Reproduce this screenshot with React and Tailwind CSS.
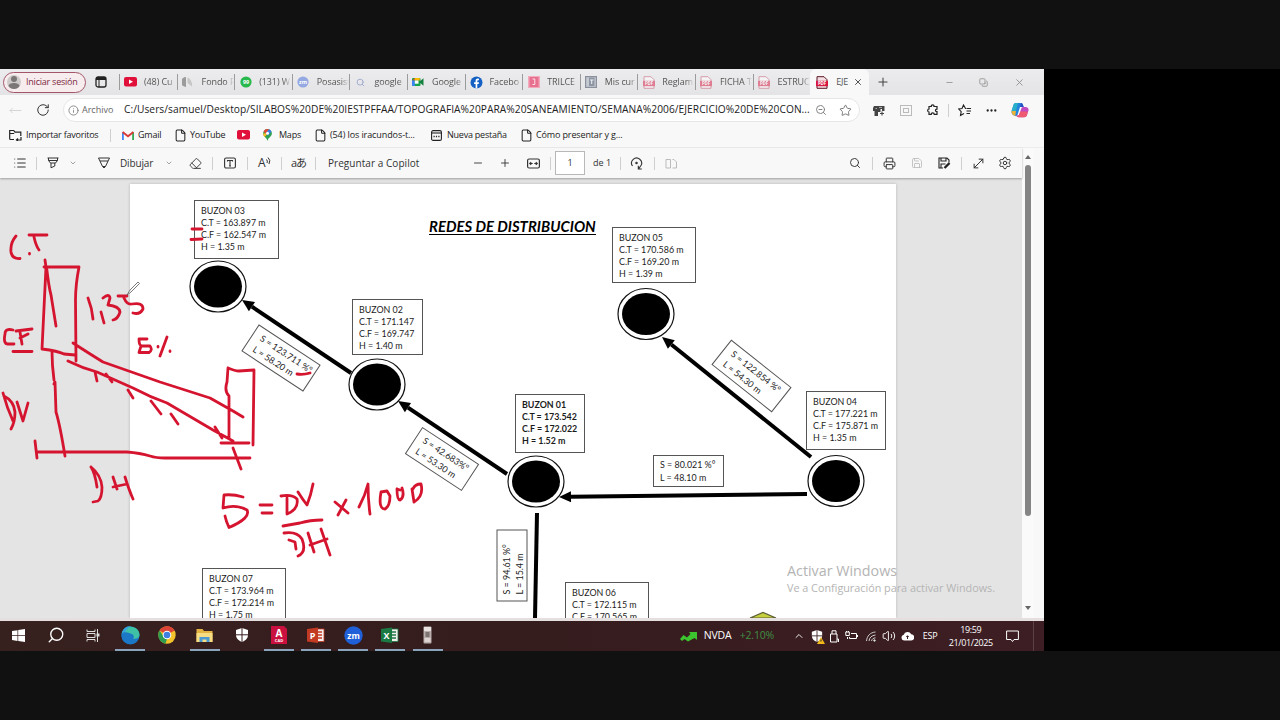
import React from "react";
import {
  RotateCw, Info, Star, ZoomOut, Search, Printer, Save, Settings, Minus, Plus, ChevronDown, ChevronUp,
  File, Eraser, X, Puzzle, Ellipsis, MoveLeft, MoveDiagonal, Copy, List, Volume2,
} from "lucide-react";

const Cell = ({ className = "", children }) => (
  <div className={"flex h-full shrink-0 items-center whitespace-nowrap " + className}>{children}</div>
);
const Sep = ({ className = "" }) => (
  <Cell className={className}><div className="h-[13px] w-px bg-[#cfcfcf]" /></Cell>
);

/* ---------- small icons ---------- */
const YouTubeIcon = () => (
  <svg width="13" height="10" viewBox="0 0 13 10"><rect width="13" height="9.6" rx="2" fill="#e0103a" /><path d="M5 2.6 9 4.8 5 7z" fill="#fff" /></svg>
);
const PdfIcon = ({ faded }) => (
  <svg width="12" height="13" viewBox="0 0 12 13" opacity={faded ? 0.5 : 1}>
    <path d="M1 .7h7l3 3v8.6H1z" fill={faded ? "#fff" : "#f3dfe3"} stroke={faded ? "#c2526a" : "#5b1524"} strokeWidth="1" />
    <rect x="0" y="4.8" width="12" height="5.4" fill="#d8163f" />
    <text x="6" y="9.2" textAnchor="middle" fontSize="4.4" fontWeight="700" fill="#fff" fontFamily="Open Sans, sans-serif">PDF</text>
  </svg>
);
const DocIcon = () => <File size={13} strokeWidth={1.9} color="#222" />;
const MeetIcon = () => (
  <svg width="12" height="10" viewBox="0 0 12 10">
    <rect x="0" y="1" width="8.5" height="8" rx="1" fill="#16a34a" /><path d="M0 3.5 2.8 1v2.5z" fill="#ea4335" />
    <path d="M2.8 1h5v2.5h-5z" fill="#fbbc04" /><path d="M0 3.5h2.8V9H1a1 1 0 0 1-1-1z" fill="#3b82f6" /><rect x="2.8" y="3.5" width="3.7" height="3.2" fill="#fff" />
    <path d="M7 5 11.5 1.2v7.6z" fill="#15803d" />
  </svg>
);
const FacebookIcon = () => (
  <svg width="13" height="13" viewBox="0 0 13 13"><circle cx="6.5" cy="6.5" r="6" fill="#1560c4" /><path d="M5.6 12.5V8H4.1V6.2h1.5V5c0-1.6.9-2.4 2.3-2.4l1.1.1v1.6h-.7c-.8 0-1 .4-1 1v.9H9L8.7 8H7.3v4.5z" fill="#fff" /></svg>
);
const GmailIcon = () => (
  <svg width="12" height="9" viewBox="0 0 12 9"><path d="M.9 9V1.2" stroke="#4285f4" strokeWidth="1.8" /><path d="M11.1 9V1.2" stroke="#34a853" strokeWidth="1.8" /><path d="M.6 1 6 5.2 11.4 1" fill="none" stroke="#d93a36" strokeWidth="1.9" /></svg>
);
const PinIcon = () => (
  <svg width="9" height="12" viewBox="0 0 9 12"><path d="M4.5 0A4.4 4.4 0 0 0 .1 4.4C.1 7.500 4 8.500 4.500 12 5 8.500 8.900 7.500 8.900 4.400A4.400 4.400 0 0 0 4.500 0z" fill="#2fa152" /><path d="M.6 2.300A4.400 4.400 0 0 1 4.500 0L6 .3 2.500 5z" fill="#e5483b" /><path d="M6 .3a4.400 4.400 0 0 1 2.500 2.300L5 6.500 2.500 5z" fill="#3d7eea" /><path d="M.1 4.400c0 1.500.8 2.500 1.700 3.500L5 4z" fill="#f4b821" /><circle cx="4.500" cy="4.300" r="1.500" fill="#fff" /></svg>
);
const Globe = () => (
  <svg width="12" height="12" viewBox="0 0 12 12"><path d="M2 1a5 5 0 0 0 0 10z" fill="#9c9c9c" transform="translate(2 0)" /><path d="M5.500 1.500c3 1 5 5 4.500 9L5.500 7z" fill="#c6c6c6" /></svg>
);
const Ball = ({ fill, label }) => (
  <svg width="12" height="12" viewBox="0 0 12 12"><circle cx="6" cy="6" r="5.600" fill={fill} /><text x="6" y="7.900" fontSize="5.500" fontWeight="700" textAnchor="middle" fill="#fff" fontFamily="Open Sans, sans-serif">{label}</text></svg>
);
const TrilceIcon = () => (
  <svg width="12" height="12" viewBox="0 0 12 12"><rect width="12" height="12" fill="#f2a9bb" /><rect x="1.500" y="1" width="9" height="10" fill="#e8718f" /><path d="M4.500 3h2.300v5.500H4.500" fill="none" stroke="#fbe3e9" /></svg>
);
const CourseIcon = () => (
  <svg width="12" height="12" viewBox="0 0 12 12"><rect x=".6" y=".6" width="10.800" height="10.800" fill="#c6cad2" stroke="#8a909c" strokeWidth="1.200" /><rect x="4" y="1.500" width="5.500" height="8.500" fill="#8f96a3" /><path d="M5 4h3.500M6.700 4v4" stroke="#eef0f4" /></svg>
);
const CopilotIcon = () => (
  <svg width="18" height="16" viewBox="0 0 18 16">
    <path d="M5 1h5c1 0 1.600.7 2 2l.6 2H9L6.500 13C6 14 5.500 14.500 4.500 14 2 13.500 0 11.500.6 9L2.500 3C3 1.600 4 1 5 1z" fill="#2384e0" />
    <path d="M1.200 7 2.500 3C3 1.600 4 1 5 1h2L5 9H.6z" fill="#28b0c8" /><path d="M.6 9H5l-.8 5C2 13.500.1 11.500.6 9z" fill="#e9b23b" />
    <path d="M12.500 5h2c2 0 3.500 1.500 3 3.500l-1.500 4.500c-.5 1.500-1.500 2.200-3 2.200H7.500c-1 0-1.800-.6-2.100-1.700h1.100c1 0 1.500-.5 1.900-1.500L10.500 6c.4-.8 1-1 2-1z" fill="#c04ac0" />
    <path d="M5.400 13.500h1.100c1 0 1.500-.5 1.900-1.500l.8-2.500h7.500L16 13c-.5 1.500-1.500 2.200-3 2.200H7.500c-1 0-1.800-.6-2.100-1.700z" fill="#ee5a72" />
    <path d="M10 1c1 0 1.600.7 2 2l.7 2H9z" fill="#2a50bf" />
  </svg>
);

/* ---------- browser chrome ---------- */
const tabs = [
  ["(48) Cu", <YouTubeIcon />], ["Fondo P", <Globe />], ["(131) W", <Ball fill="#27b84e" label="99" />],
  ["Posasist", <Ball fill="#94a8e2" label="zm" />], ["google", <Search size={9} color="#a0a9cf" strokeWidth={2.500} />], ["Google", <MeetIcon />],
  ["Facebo", <FacebookIcon />], ["TRILCE", <TrilceIcon />], ["Mis cur", <CourseIcon />],
  ["Reglam", <PdfIcon faded />], ["FICHA T", <PdfIcon faded />], ["ESTRUC", <PdfIcon faded />],
];

const TabStrip = () => (
  <div className="flex h-[26px] items-end bg-gradient-to-b from-[#ececee] to-[#e4e4e6] text-[9px] tracking-[-0.01em] text-[#555]">
    <Cell className="w-[94px] pl-[3px]">
      <div className="flex h-[21px] w-[83px] items-center rounded-full border border-[#a3566a] bg-[#f7ecee] pl-[3px] text-[#7d2b42]">
        <svg width="14" height="14" viewBox="0 0 14 14"><circle cx="7" cy="7" r="7" fill="#cfcaca" /><circle cx="7" cy="4" r="3" fill="#7b7777" /><path d="M1.500 11c0-4 11-4 11 0-2 4-9 4-11 0z" fill="#7b7777" /></svg>
        <span className="ml-[5px] tracking-[-0.025em]">Iniciar sesión</span>
      </div>
    </Cell>
    <Cell className="w-[25px] pl-[1px]">
      <svg width="12" height="12" viewBox="0 0 12 12"><rect x="1" y="1" width="10" height="10" rx="2" fill="none" stroke="#222" strokeWidth="1.300" /><path d="M1 1h10v3H1z" fill="#222" /><path d="M4 4v7" stroke="#222" /></svg>
    </Cell>
    {tabs.map(([name, icon], i) => (
      <Cell key={i} className="w-[57.600px]">
        <div className="h-[16px] w-px bg-[#9b9b9b]" />
        <div className="ml-1 flex w-[13px] justify-center">{icon}</div>
        <div className="ml-[7px] w-[32px] overflow-hidden [mask-image:linear-gradient(to_right,black_75%,transparent)]">{name}</div>
      </Cell>
    ))}
    <div className="flex h-[26px] w-[59px] items-center rounded-t-md bg-[#f8f8f8] pl-[6px]">
      <PdfIcon />
      <div className="ml-[8px] w-[13px] overflow-hidden">EJE</div>
      <X size={10} color="#333" className="ml-[4px]" />
    </div>
    <Cell className="w-[76px] pl-[7px]"><Plus size={14} strokeWidth={1.800} color="#444" /></Cell>
    <Cell className="w-[34px]"><Minus size={9} color="#888" /></Cell>
    <Cell className="w-[35px]"><Copy size={9} color="#888" className="-scale-x-100 rotate-90" /></Cell>
    <Cell><X size={11} color="#888" strokeWidth={1.800} /></Cell>
  </div>
);

const AddressBar = () => (
  <div className="flex h-[28px] items-center bg-[#f8f8f8] pt-[2px]">
    <Cell className="w-[36px] pl-[9px]"><MoveLeft size={13} color="#d4d4d4" strokeWidth={1.800} /></Cell>
    <Cell className="w-[27px]"><RotateCw size={14} color="#333" strokeWidth={1.700} /></Cell>
    <div className="flex h-[24px] w-[797px] items-center rounded-full border border-[#e6e6e6] bg-white">
      <Cell className="w-[18px] pl-[4px]"><Info size={11} color="#777" strokeWidth={1.800} /></Cell>
      <Cell className="w-[42px] text-[9px] text-[#666]">Archivo</Cell>
      <Cell className="w-[691px] text-[10.200px] tracking-[0.005em] text-[#222]">C:/Users/samuel/Desktop/SILABOS%20DE%20IESTPFFAA/TOPOGRAFIA%20PARA%20SANEAMIENTO/SEMANA%2006/EJERCICIO%20DE%20CON...</Cell>
      <Cell className="w-[24px]"><ZoomOut size={12} color="#777" strokeWidth={1.800} /></Cell>
      <Cell><Star size={13} color="#777" strokeWidth={1.800} /></Cell>
    </div>
    <Cell className="w-[40px] pl-[13px]">
      <svg width="12" height="11" viewBox="0 0 12 11"><path d="M1 1h10.500v5H9V4H7.500v3H5v4H1.500V6H0V3z" fill="#444" /><path d="M2.500 3.500h1.500M6 2.500h3" stroke="#aaa" fill="none" /><path d="M7 8.500h4M9 6.500v4" stroke="#444" strokeWidth="1.100" /></svg>
    </Cell>
    <Cell className="w-[27px]"><svg width="12" height="11" viewBox="0 0 12 11" fill="none" stroke="#bbb"><rect x=".5" y=".5" width="11" height="10" /><rect x="3.500" y="3.500" width="5" height="4" /></svg></Cell>
    <Cell className="w-[21px]">
      <svg width="12" height="12" viewBox="0 0 12 12" fill="none" stroke="#222" strokeWidth="1.200"><path d="M2 2.500h2.300C4 .3 7.300.3 7 2.500h3v2.700C8 5 8 8 10 7.700v2.600H7.200c0-2-3-2-3 0H2V8C.2 8 .2 5 2 5z" /></svg>
    </Cell>
    <Sep className="w-[10px]" />
    <Cell className="w-[27px]">
      <svg width="14" height="13" viewBox="0 0 14 13" fill="none" stroke="#222" strokeWidth="1.100"><path d="M8.500 4.500H7.500L5.500 1 4 4.500.8 5l2.400 2.600L2.500 11.500 6 9.500M9 4.500h4M8.500 7h4.500M8.500 9.500h3.500" /></svg>
    </Cell>
    <Cell className="w-[26px]"><Ellipsis size={13} color="#222" strokeWidth={2.300} /></Cell>
    <Cell><CopilotIcon /></Cell>
  </div>
);

const Bookmarks = () => (
  <div className="flex h-[25px] items-center border-b border-[#ececec] bg-[#f8f8f8] pl-[9px] text-[9px] tracking-[-0.025em] text-[#222]">
    <Cell className="w-[17px]"><svg width="13" height="12" viewBox="0 0 13 12" fill="none" stroke="#222" strokeWidth="1.200"><path d="M5 10.500H1.500a.8.8 0 0 1-.8-.8V1.500h4l1.300 1.700h5.800V7M.7 4.500h4.500M12 8v3H7.500M9 9.500 7.500 11 9 12" /></svg></Cell>
    <Cell className="w-[84px]">Importar favoritos</Cell>
    <Sep className="w-[12px]" />
    <Cell className="w-[16px]"><GmailIcon /></Cell>
    <Cell className="w-[36px]">Gmail</Cell>
    <Cell className="w-[16px]"><DocIcon /></Cell>
    <Cell className="w-[47px]">YouTube</Cell>
    <Cell className="w-[26px]"><YouTubeIcon /></Cell>
    <Cell className="w-[16px]"><PinIcon /></Cell>
    <Cell className="w-[35px]">Maps</Cell>
    <Cell className="w-[16px]"><DocIcon /></Cell>
    <Cell className="w-[101px] tracking-[-0.01em]">(54) los iracundos-t...</Cell>
    <Cell className="w-[16px]"><svg width="11" height="11" viewBox="0 0 11 11" fill="none" stroke="#222" strokeWidth="1.100"><rect x=".6" y=".6" width="9.800" height="9.800" rx="1.500" /><path d="M1 3h9" /><path d="M2.500 6.500h6" strokeDasharray="1.200 1.200" strokeWidth="1.500" /></svg></Cell>
    <Cell className="w-[73px]">Nueva pestaña</Cell>
    <Cell className="w-[16px]"><DocIcon /></Cell>
    <Cell className="tracking-[-0.015em]">Cómo presentar y g...</Cell>
  </div>
);

const PdfToolbar = () => (
  <div className="relative z-10 flex h-[30px] items-center bg-[#f8f8f8] pl-[13px] text-[10px] text-[#333] shadow-[0_1px_2px_rgba(0,0,0,0.3)]">
    <Cell className="w-[23px]"><List size={14} color="#333" strokeWidth={1.800} /></Cell>
    <Sep className="w-[11px]" />
    <Cell className="w-[22px]"><svg width="12" height="12" viewBox="0 0 12 12" fill="none" stroke="#333" strokeWidth="1"><path d="M.5 1h11M1.500 1v2.500l2 2.500h5l2-2.500V1M1.500 3.500h9M4 6v4.800L7.800 9V6" /></svg></Cell>
    <Cell className="w-[29px]"><ChevronDown size={8} color="#777" /></Cell>
    <Cell className="w-[22px]"><svg width="12" height="12" viewBox="0 0 12 12" fill="none" stroke="#333" strokeWidth="1"><path d="M.5 1h11L7.500 9.500 6 11 4.500 9.500zM2 4h8M4.500 9.500h3" /></svg></Cell>
    <Cell className="w-[45px] tracking-[-0.015em]">Dibujar</Cell>
    <Cell className="w-[24px]"><ChevronDown size={8} color="#777" /></Cell>
    <Cell className="w-[23px]"><Eraser size={13} color="#333" strokeWidth={1.700} /></Cell>
    <Sep className="w-[12px]" />
    <Cell className="w-[23px]"><svg width="12" height="12" viewBox="0 0 12 12" fill="none" stroke="#333" strokeWidth="1.100"><rect x=".6" y="1" width="10.800" height="10" rx="1.500" /><path d="M3.500 4.500v-1h5v1M6 3.500v5.500M5 9h2" /></svg></Cell>
    <Sep className="w-[11px]" />
    <Cell className="w-[23px]"><span className="text-[12px]">A</span><svg width="5" height="8" viewBox="0 0 5 8" className="mb-1" fill="none" stroke="#333"><path d="M.5 2.500Q2 4 1 6M2 .5Q5 3 3 7" /></svg></Cell>
    <Sep className="w-[10px]" />
    <Cell className="w-[24px] text-[11px] tracking-[-0.09em] [font-family:'Open_Sans','Noto_Sans_CJK_JP',sans-serif]">aあ</Cell>
    <Sep className="w-[13px]" />
    <Cell className="w-[144px] tracking-[0.005em]">Preguntar a Copilot</Cell>
    <Cell className="w-[27px]"><Minus size={12} strokeWidth={1.800} /></Cell>
    <Cell className="w-[28px]"><Plus size={12} strokeWidth={1.800} /></Cell>
    <Cell className="w-[23px]"><svg width="13" height="11" viewBox="0 0 13 11" fill="none" stroke="#333" strokeWidth="1.200"><rect x=".6" y="1" width="11.800" height="9" rx="1.500" /><path d="M3 5.500h2.700M7.300 5.500H10M4.200 4.200 2.800 5.500l1.400 1.300M8.800 4.200l1.400 1.300-1.400 1.300" /></svg></Cell>
    <Sep className="w-[5px]" />
    <div className="flex h-[24px] w-[30px] items-center justify-center border border-[#b8b8b8] bg-white text-[9px]">1</div>
    <Cell className="w-[35px] pl-[8px] text-[9px]">de 1</Cell>
    <Sep className="w-[10px]" />
    <Cell className="w-[24px]"><svg width="13" height="13" viewBox="0 0 13 13" fill="none" stroke="#333" strokeWidth="1.100"><path d="M2.500 9A5 5 0 1 1 10.800 8.800L8.500 11.800M11.800 12H8.300V8.800" /><circle cx="6.500" cy="6" r=".7" fill="#333" /></svg></Cell>
    <Sep className="w-[11px]" />
    <Cell className="w-[184px]"><svg width="12" height="11" viewBox="0 0 12 11" fill="none" stroke="#bbb"><path d="M5.500 10H1V1.500h4.500zM7.500 1.500h1.500L11.500 4v6h-4" /></svg></Cell>
    <Cell className="w-[23px]"><Search size={12} color="#333" strokeWidth={1.900} /></Cell>
    <Sep className="w-[11px]" />
    <Cell className="w-[28px]"><Printer size={13} color="#333" strokeWidth={1.800} /></Cell>
    <Cell className="w-[27px]"><Save size={12} color="#bbb" strokeWidth={1.700} /></Cell>
    <Cell className="w-[23px]"><svg width="13" height="12" viewBox="0 0 13 12" fill="none" stroke="#222" strokeWidth="1.100"><path d="M5 11H1V1h8l2 2v2.500M3 1v3h5V1M3 11V7h4.500" /><path d="m6.500 11 5-5" strokeWidth="2.400" /></svg></Cell>
    <Sep className="w-[10px]" />
    <Cell className="w-[27px]"><MoveDiagonal size={15} color="#333" strokeWidth={1.600} /></Cell>
    <Cell><Settings size={14} color="#333" strokeWidth={1.700} /></Cell>
  </div>
);

/* ---------- network drawing ---------- */
const base = "absolute border border-[#555] bg-white whitespace-nowrap text-[#1c1c1c] [font-family:Lato,sans-serif] ";
const Box = ({ className, lines }) => (
  <div className={base + "pt-[4px] pl-[6px] text-[8.900px] leading-[12.100px] " + className}>
    {lines.map((l) => <div key={l}>{l}</div>)}
  </div>
);
const PipeBox = ({ className, lines }) => (
  <div className={base + "pt-[2px] text-[8.900px] leading-[13.300px] " + className}>
    {lines.map((l) => <div key={l}>{l}</div>)}
  </div>
);

const nodes = [[218, 286.5], [377, 384.5], [536, 481.5], [646, 314], [836, 481]];
const arrows = [[351, 373, 242, 300], [507, 474, 398, 401], [811, 457, 662, 337], [807, 494, 559, 497]];

const ink = [
  "M16 236Q10 243 11 252Q12 259 20 258.500", "M29.500 253.500v.5", "M29 235H47M34 237Q36 246 39 250",
  "M45 260 46 267 42 349Q58 351 64 354L75 355", "M44 267H79Q75.500 285 75.500 300L76 361", "M46.500 267Q49 288 51 295L56 326",
  "M88 298Q92 308 93 319M101 312 104 323M103 298Q109 293 110 298L108 305Q119 306 120 312Q118 319 113 320",
  "M118 296H127M124 298Q127 305 132 304Q143 302 143 309Q140 315 133 313",
  "M13 330Q5 328 5 334Q3 344 8 344H14M16 331 32 329M20 332 22 344M20 338 28 334M13 351.500H32",
  "M147 339H139Q139 346 142 346H150Q153 350 149 352.500H139L141 346M167 337 160 356M158 346.500v.5M170 351v.5",
  "M52 352Q52 365 54 380M54 384 55 382 56 412Q60 425 65 456",
  "M73 343Q90 354 103 362L160 382 210 398 233 411 243 417", "M68 361Q82 368 97 372L133 388Q150 397 167 403L213 430 233 441",
  "M95 372 97 381M106 374 112 382M128 390 133 398M151 401 161 414M171 414 178 424M215 427 222 438",
  "M228 368 227 382Q224 391 229 396V438M228 368Q235 371 239 371L254 370 253 445M221 443H249",
  "M35 441 37 458M37 452H127Q140 453 150 456Q156 458 165 458H250M233 448 241 469",
  "M3 393Q7 408 13 421M4 396Q14 401 15 412Q15 422 11 429M17 402 23 421 28 403",
  "M91 467Q95 473 97 487M91 467Q101 475 102 487Q102 498 98 501L93 502M113 477 117 489M113 487 127 484M125 477Q129 490 133 499",
  "M243 497Q233 494 224 495L223 508Q236 504 247 510Q251 518 229 527.500Q226 521 225 516M260 505H272M262 513H272",
  "M287 498V514M281 496Q292 494 297 499Q299 509 287 514M298 492Q303 500 307 505Q311 495 313 484M283 526 300 523Q310 520 322 520",
  "M284 533Q297 531 302 539Q307 552 298 556M289 540 295 542 296 549M308 533 314 552M310 545 327 539M321 529 330 555",
  "M335 502 348 513M346 500 338 515M359 507Q365 496 368 484Q368 500 370 514M381 492Q378 509 385 509Q390 506 390 496L387 491Z",
  "M397 489Q397 500 400 500Q405 497 402 488M397 489 400 490M412 489 414 502Q424 496 421 484Q415 484 413 489",
  "M192 229H202M191 239.500 202 239M297 374Q303 375 310 373",
];

const Drawing = () => (
  <svg className="absolute top-0 left-0" width="1022" height="440" viewBox="0 178 1022 440">
    {nodes.map(([x, y]) => (
      <g key={x}><ellipse cx={x} cy={y} rx="28" ry="25.500" fill="#fff" stroke="#111" strokeWidth="1.200" /><ellipse cx={x} cy={y} rx="24" ry="21" /></g>
    ))}
    {arrows.map(([x1, y1, x2, y2]) => {
      const d = Math.hypot(x2 - x1, y2 - y1), ux = (x2 - x1) / d, uy = (y2 - y1) / d;
      const bx = x2 - ux * 12, by = y2 - uy * 12;
      return (
        <g key={x1}>
          <path d={`M${x1} ${y1}L${bx} ${by}`} stroke="#000" strokeWidth="4" />
          <path d={`M${x2} ${y2}L${bx - uy * 5.500} ${by + ux * 5.500}L${bx + uy * 5.500} ${by - ux * 5.500}z`} />
        </g>
      );
    })}
    <path d="M537 513 535 618" stroke="#000" strokeWidth="4" />
    <path d="M750 618 763 612.500 776 618z" fill="#c6cf3e" stroke="#5c5f35" strokeWidth="1.200" />
  </svg>
);

const Ink = () => (
  <svg className="absolute top-0 left-0" width="1022" height="440" viewBox="0 178 1022 440">
    <path d={ink.join("")} fill="none" stroke="#d5142f" strokeWidth="2.800" strokeLinecap="round" strokeLinejoin="round" />
    <path d="M127 295 130 290 138 282 139.500 283.500 131 292z" fill="#fff" stroke="#555" strokeWidth=".8" />
  </svg>
);

const Viewer = () => (
  <div className="relative h-[440px] w-[1022px] overflow-hidden bg-[#e4e4e4] pt-[6px]">
    <div className="ml-[130px] h-[434px] w-[766px] bg-white shadow-[0_0_3px_rgba(0,0,0,0.2)]" />
    <Drawing />
    <div className="absolute top-[41px] left-[429px] border-b-[1.500px] border-black text-[14.900px] leading-[15px] font-bold whitespace-nowrap text-black italic [font-family:Lato,sans-serif]">REDES DE DISTRIBUCION</div>
    <Box className="top-[22px] left-[194px] h-[59px] w-[85px]" lines={["BUZON 03", "C.T = 163.897 m", "C.F = 162.547 m", "H = 1.35 m"]} />
    <Box className="top-[121px] left-[352px] h-[56px] w-[71px]" lines={["BUZON 02", "C.T = 171.147", "C.F = 169.747", "H = 1.40 m"]} />
    <Box className="top-[216px] left-[515px] h-[59px] w-[70px] font-bold" lines={["BUZON 01", "C.T = 173.542", "C.F = 172.022", "H = 1.52 m"]} />
    <Box className="top-[49px] left-[612px] h-[56px] w-[84px]" lines={["BUZON 05", "C.T = 170.586 m", "C.F = 169.20 m", "H = 1.39 m"]} />
    <Box className="top-[213px] left-[806px] h-[59px] w-[80px]" lines={["BUZON 04", "C.T = 177.221 m", "C.F = 175.871 m", "H = 1.35 m"]} />
    <Box className="top-[390px] left-[202px] h-[60px] w-[84px]" lines={["BUZON 07", "C.T = 173.964 m", "C.F = 172.214 m", "H = 1.75 m"]} />
    <Box className="top-[404px] left-[565px] h-[60px] w-[84px]" lines={["BUZON 06", "C.T = 172.115 m", "C.F = 170.565 m"]} />
    <PipeBox className="top-[277px] left-[653px] h-[32px] w-[71px] pl-[6px]" lines={["S = 80.021 %°", "L = 48.10 m"]} />
    <PipeBox className="top-[163.500px] left-[243.500px] h-[32px] w-[74px] rotate-[33.300deg] pl-[8px]" lines={["S = 123.711 %°", "L = 58.20 m"]} />
    <PipeBox className="top-[265px] left-[407.500px] h-[32px] w-[68px] rotate-[33.300deg] pl-[7px]" lines={["S = 42.683%°", "L = 53.30 m"]} />
    <PipeBox className="top-[181.500px] left-[712.500px] h-[32px] w-[77px] rotate-[38.400deg] pl-[8px]" lines={["S = 122.854 %°", "L = 54.30 m"]} />
    <PipeBox className="top-[371.500px] left-[476px] h-[31px] w-[72px] -rotate-90 pl-[6px]" lines={["S = 94.61 %°", "L = 15.4 m"]} />
    <Ink />
    <div className="absolute top-[383px] left-[787px] whitespace-nowrap text-[#b4b4b4]">
      <div className="text-[14.300px] leading-[19px]">Activar Windows</div>
      <div className="text-[10.800px] leading-[16px]">Ve a Configuración para activar Windows.</div>
    </div>
  </div>
);

const Scrollbar = () => (
  <div className="flex w-[12px] flex-col items-center bg-[#fafafa] pt-[7px] pb-[8px]">
    <div className="h-0 w-0 border-x-[3.500px] border-b-[4px] border-x-transparent border-b-[#666]" />
    <div className="mt-[6px] h-[351px] w-[6px] rounded-full bg-[#858585]" />
    <div className="grow" />
    <div className="h-0 w-0 border-x-[3.500px] border-t-[4px] border-x-transparent border-t-[#666]" />
  </div>
);

/* ---------- taskbar ---------- */
const TaskItem = ({ active, children }) => (
  <div className="flex h-full w-[37.200px] shrink-0 flex-col items-center">
    <div className="flex h-[28px] items-center">{children}</div>
    {active && <div className="h-[2px] w-[30px] bg-[#8ba4bd]" />}
  </div>
);

const Office = ({ fill, letter }) => (
  <svg width="18" height="17" viewBox="0 0 18 17"><rect x="8" y="2" width="9" height="12.500" fill="#f4eeee" stroke={fill} strokeWidth=".8" /><path d="M11 5h4M11 8h4M11 11h4" stroke={fill} strokeWidth="1.300" /><path d="M0 2 11 .5v15.500L0 14.500z" fill={fill} /><text x="5.500" y="12" fontSize="9" fontWeight="700" fill="#fff" textAnchor="middle" fontFamily="Open Sans, sans-serif">{letter}</text></svg>
);

const Shield = ({ size }) => (
  <svg width={size} height={size} viewBox="0 0 14 14"><path d="M7 0 13 2v5c0 3.500-2.500 5.500-6 7-3.500-1.500-6-3.500-6-7V2z" fill="#fff" /><path d="M7 0v14M1 6.800h12" stroke="#3a1d20" strokeWidth="1" /></svg>
);

const Taskbar = () => (
  <div className="flex h-[30px] items-center bg-gradient-to-r from-[#37211f] via-[#351c1d] to-[#3d1e24] text-white">
    <TaskItem><svg width="13" height="13" viewBox="0 0 13 13" fill="#fff"><path d="M0 2 5.500 1.200v5H0zM6.200 1.100 13 0v6.200H6.200zM0 6.900h5.500v5L0 11.100zM6.200 6.900H13V13l-6.800-1z" /></svg></TaskItem>
    <TaskItem><Search size={18} className="-scale-x-100" strokeWidth={1.800} /></TaskItem>
    <TaskItem><svg width="14" height="13" viewBox="0 0 14 13" fill="none" stroke="#ddd"><path d="M1 .5v2h8v-2M1 12.500v-2h8v2M1 4.500h8v4H1zM11.500 0v13" /><rect x="11" y="5" width="2" height="2" fill="#ddd" /></svg></TaskItem>
    <TaskItem active>
      <svg width="19" height="19" viewBox="0 0 19 19"><circle cx="9.500" cy="9.500" r="9" fill="#1c78c6" /><path d="M.6 8C2-1.500 17-2 18.500 8c.3 4-3 5.500-6.500 4.500 1.500-1.200 1-4.500-2.500-5C5 7 1.500 7.500.6 8z" fill="#3fc1a5" /><path d="M.6 8C2 2 6-.5 10 .5 5 2 6 5 3.500 6.500z" fill="#35a4dd" /><path d="M.6 8C1.500 6 5 5.500 8 7c1 .5 1.500 1 2 2-1.500.5-2.500 2-1.500 4 1 2.500 3.500 3 7 2.500C12 20-.5 19 .6 8z" fill="#1c78c6" /></svg>
    </TaskItem>
    <TaskItem>
      <svg width="18" height="18" viewBox="0 0 18 18"><circle cx="9" cy="9" r="8.700" fill="#f3c32c" /><path d="M9 9 1.500 4.600A8.700 8.700 0 0 1 16.500 4.600z" fill="#dc4437" /><path d="M9 .3a8.700 8.700 0 0 1 7.500 4.600H9z" fill="#dc4437" /><path d="M1.500 4.600 6 11l3 2-1.500 4.600A8.700 8.700 0 0 1 1.500 4.600z" fill="#2d9b50" /><circle cx="9" cy="9" r="4.300" fill="#fff" /><circle cx="9" cy="9" r="3.300" fill="#3f7fe0" /></svg>
    </TaskItem>
    <TaskItem active>
      <svg width="17" height="15" viewBox="0 0 17 15"><path d="M.5 1h6l1.500 2h8.500v11H.5z" fill="#e3b443" /><path d="M.5 5h16v9H.5z" fill="#f6dc83" /><path d="M3.500 14V9h10v5h-3v-2.500h-4V14z" fill="#4b9ad4" /></svg>
    </TaskItem>
    <TaskItem><Shield size={14} /></TaskItem>
    <TaskItem active>
      <svg width="17" height="18" viewBox="0 0 17 18"><path d="M1 0h13l3 3v15H1z" fill="#c9103f" /><text x="9" y="10.500" fontSize="10" fontWeight="700" textAnchor="middle" fill="#fff" fontFamily="Open Sans, sans-serif">A</text><text x="9" y="16" fontSize="4" fontWeight="700" textAnchor="middle" fill="#fff" fontFamily="Open Sans, sans-serif">CAD</text></svg>
    </TaskItem>
    <TaskItem active><Office fill="#c23a22" letter="P" /></TaskItem>
    <TaskItem active>
      <svg width="19" height="19" viewBox="0 0 19 19"><circle cx="9.500" cy="9.500" r="9.200" fill="#1f5fd8" /><text x="9.500" y="12.500" fontSize="8.500" fontWeight="700" textAnchor="middle" fill="#fff" fontFamily="Open Sans, sans-serif">zm</text></svg>
    </TaskItem>
    <TaskItem active><Office fill="#1b7a44" letter="X" /></TaskItem>
    <TaskItem active>
      <svg width="9" height="18" viewBox="0 0 9 18"><rect x=".5" y=".5" width="8" height="17" rx="1" fill="#b9aeac" /><rect x="1" y="1" width="7" height="4" fill="#e8e2e0" /><rect x="2.500" y="6" width="4" height="5" fill="#7d7472" /><rect x="1.500" y="12" width="6" height="4" fill="#ded5d2" /></svg>
    </TaskItem>
    <Cell className="ml-[234px] w-[23.500px]"><svg width="17" height="11" viewBox="0 0 17 11"><path d="M0 8 3.500 4 7 6.500 10.500 3 9 1h8v8l-2.500-2L8 10.500 4.500 8 2 10z" fill="#3cc52e" /></svg></Cell>
    <Cell className="w-[36px] text-[10.500px] tracking-[-0.02em]">NVDA</Cell>
    <Cell className="w-[53px] text-[10.500px] tracking-[-0.02em] text-[#3f8f43]">+2.10%</Cell>
    <Cell className="w-[18px]"><ChevronUp size={12} strokeWidth={1.800} /></Cell>
    <Cell className="w-[18px]"><div className="relative"><Shield size={12} /><svg className="absolute -right-[2px] -bottom-[2px]" width="8" height="7" viewBox="0 0 8 7"><path d="M4 0 8 7H0z" fill="#f2b91c" /><path d="M4 2.500v2" stroke="#222" /></svg></div></Cell>
    <Cell className="w-[16px]"><svg width="10" height="13" viewBox="0 0 10 13" fill="none" stroke="#fff"><path d="M3 4V.8h4V4M1.500 4h6.500v8H1.500zM8 9h1.500v3" /></svg></Cell>
    <Cell className="w-[21px]"><svg width="13" height="10" viewBox="0 0 13 10" fill="none" stroke="#fff"><path d="M6 2.500h5.500v5h-7V6M12.500 4v2M2.500 6V8M.8 1v3.500h3.500V1zM1.500 0v1M3.500 0v1" /></svg></Cell>
    <Cell className="w-[16px]"><svg width="10" height="11" viewBox="0 0 10 11" fill="none" stroke="#ccc"><path d="M.5 10C1 5 4 1.500 9.500 1M3 10c.5-3.500 2.500-5.500 6.500-6M5.500 10c.5-2 1.800-3 4-3.200" /><circle cx="8.500" cy="9.500" r=".8" fill="#fff" /></svg></Cell>
    <Cell className="w-[19px]"><Volume2 size={14} strokeWidth={1.600} /></Cell>
    <Cell className="w-[22px]"><svg width="13" height="10" viewBox="0 0 13 10"><path d="M3 9.500a2.900 2.900 0 0 1-.3-5.700 4 4 0 0 1 7.500-.5A3.100 3.100 0 0 1 10 9.500z" fill="#fff" /><path d="M6.500 8V5M5.300 6 6.500 4.700 7.700 6" stroke="#3a1d20" fill="none" /></svg></Cell>
    <Cell className="w-[20px] text-[9px] tracking-[-0.03em]">ESP</Cell>
    <div className="ml-[1px] flex w-[54px] flex-col items-center text-[9px] leading-[13.500px] tracking-[-0.04em]"><span>19:59</span><span>21/01/2025</span></div>
    <Cell className="ml-[8px]"><svg width="13" height="13" viewBox="0 0 13 13" fill="none" stroke="#fff"><path d="M.6 1h11.800v8.500H8L6.500 11.500 5 9.500H.6z" /></svg></Cell>
    <div className="ml-[14px] h-full w-px bg-[#5b4145]" />
  </div>
);

export default function App() {
  return (
    <div className="h-[720px] w-[1280px] overflow-hidden bg-[#111] pt-[69px] [font-family:'Open_Sans','Noto_Sans',sans-serif]">
      <div className="flex h-[582px] bg-black">
        <div className="flex w-[1044px] flex-col overflow-hidden bg-[#f8f8f8]">
          <TabStrip />
          <AddressBar />
          <Bookmarks />
          <div className="flex h-[470px]">
            <div className="w-[1022px]">
              <PdfToolbar />
              <Viewer />
            </div>
            <Scrollbar />
          </div>
          <div className="h-[3px] grow bg-[#e6dfe0]" />
          <Taskbar />
        </div>
      </div>
    </div>
  );
}
